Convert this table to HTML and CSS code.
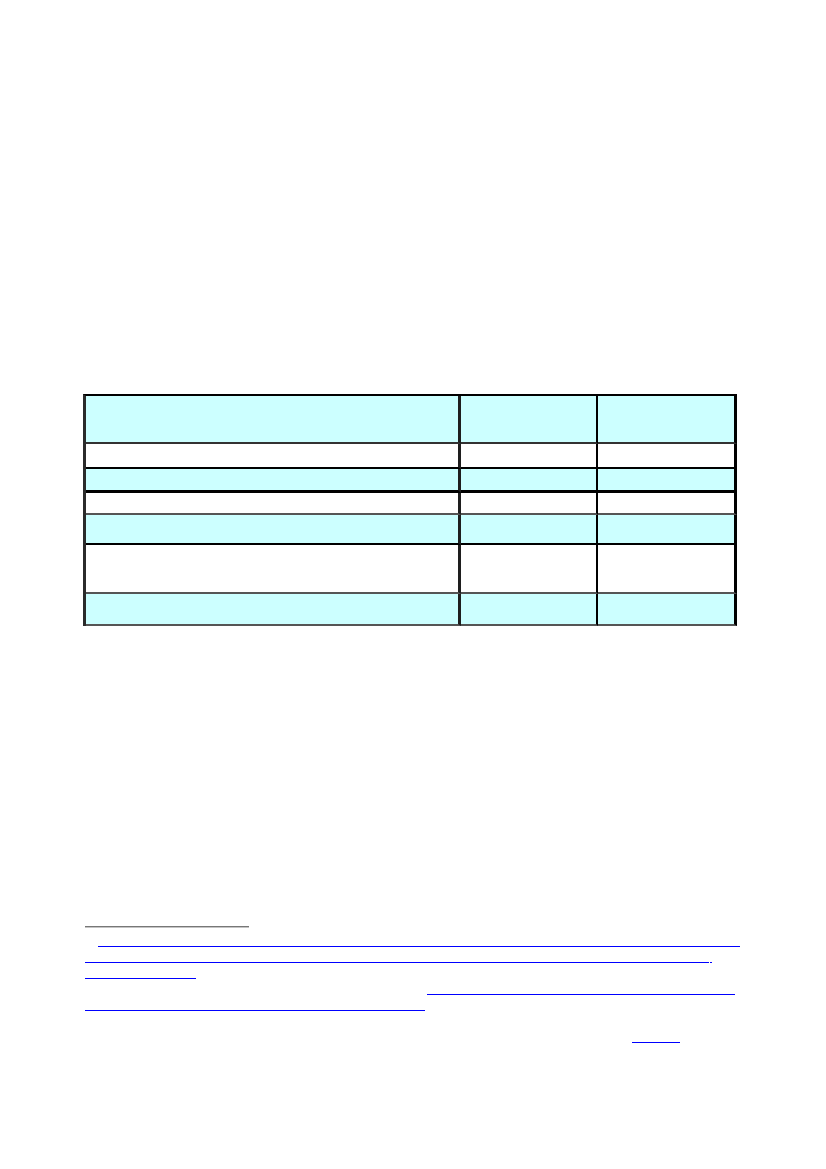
FILE: index.html
```html
<!DOCTYPE html>
<html lang="en">
<head>
<meta charset="utf-8">
<title>Document page</title>
<link rel="stylesheet" href="styles.css">
</head>
<body>
<div class="page">
  <table class="grid">
    <tr class="r-head cyan">
      <td class="c1"></td><td class="c2"></td><td class="c3"></td>
    </tr>
    <tr class="r1">
      <td class="c1"></td><td class="c2"></td><td class="c3"></td>
    </tr>
    <tr class="r2 cyan thick">
      <td class="c1"></td><td class="c2"></td><td class="c3"></td>
    </tr>
    <tr class="r3 grey">
      <td class="c1"></td><td class="c2"></td><td class="c3"></td>
    </tr>
    <tr class="r4 cyan">
      <td class="c1"></td><td class="c2"></td><td class="c3"></td>
    </tr>
    <tr class="r5 grey">
      <td class="c1"></td><td class="c2"></td><td class="c3"></td>
    </tr>
    <tr class="r6 cyan grey">
      <td class="c1"></td><td class="c2"></td><td class="c3"></td>
    </tr>
  </table>

  <div class="notes">
    <div class="sep"></div>
    <div class="note-lines">
      <div class="line"><a class="link l1" href="#"></a></div>
      <div class="line"><a class="link l2" href="#"></a><a class="link l2b" href="#"></a></div>
      <div class="line"><a class="link l3" href="#"></a></div>
      <div class="line"><a class="link l4" href="#"></a></div>
      <div class="line"><a class="link l5" href="#"></a></div>
      <div class="line"></div>
      <div class="line"><a class="link l7" href="#"></a></div>
    </div>
  </div>
</div>
</body>
</html>
```

FILE: styles.css
```css
html, body {
  margin: 0;
  padding: 0;
  background: #ffffff;
  font-family: "Liberation Serif", "Times New Roman", serif;
}

.page {
  width: 826px;
  min-height: 1169px;
  padding: 394px 0 0 83px;
  box-sizing: border-box;
}

.grid {
  border-collapse: separate;
  border-spacing: 0;
  table-layout: fixed;
  border-top: 2px solid #000000;
  border-left: 3px solid #2b2b2b;
}

.grid td {
  padding: 0;
  border-bottom: 2px solid #000000;
  background: #ffffff;
  box-sizing: content-box;
}

.grid .c1 {
  width: 372px;
  border-right: 3px solid #1e1e1e;
}

.grid .c2 {
  width: 135px;
  border-right: 2px solid #000000;
}

.grid .c3 {
  width: 136px;
  border-right: 3px solid #000000;
}

.grid .cyan td { background: #ccffff; }

.grid .r-head td { height: 46px; border-bottom-color: #333333; }
.grid .r1 td { height: 23px; }
.grid .r2 td { height: 21px; border-bottom-width: 3px; }
.grid .r3 td { height: 20px; }
.grid .r4 td { height: 28px; }
.grid .r5 td { height: 47px; }
.grid .r6 td { height: 30px; }

.grid .grey td { border-bottom-color: #555555; }

.notes {
  padding-top: 300px;
  padding-left: 2px;
}

.sep {
  width: 164px;
  height: 1px;
  background: #777777;
  border-bottom: 1px solid #c4c4c4;
}

.note-lines {
  padding-top: 3px;
}

.line {
  display: flex;
  height: 16px;
}

.link {
  display: block;
  height: 15px;
  border-bottom: 1px solid #0000ff;
}

.l1 { margin-left: 13px; width: 642px; }
.l2 { width: 624px; }
.l2b { margin-left: 1px; width: 2px; }
.l3 { width: 111px; }
.l4 { margin-left: 342px; width: 308px; }
.l5 { width: 340px; }
.l7 { margin-left: 547px; width: 48px; }
```
